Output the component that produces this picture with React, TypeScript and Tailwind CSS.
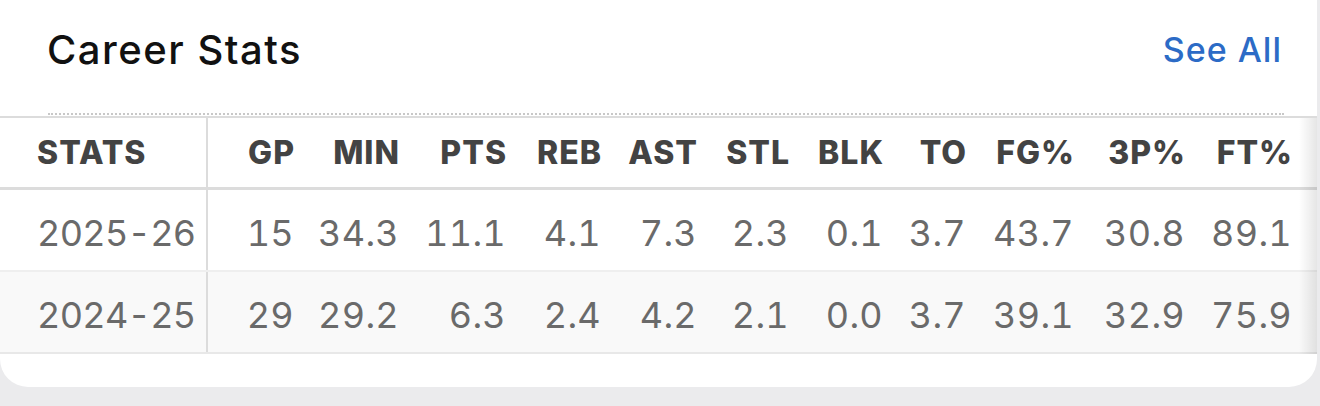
import React from "react";

const cols = [
  { k: "GP", w: "w-[86px]" },
  { k: "MIN", w: "w-[105px]" },
  { k: "PTS", w: "w-[107px]" },
  { k: "REB", w: "w-[95px]" },
  { k: "AST", w: "w-[96px]" },
  { k: "STL", w: "w-[92px]" },
  { k: "BLK", w: "w-[94px]" },
  { k: "TO", w: "w-[83px]" },
  { k: "FG%", w: "w-[108px]" },
  { k: "3P%", w: "w-[111px]" },
  { k: "FT%", w: "w-[107px]" },
];

const rows = [
  { season: "2025-26", vals: ["15", "34.3", "11.1", "4.1", "7.3", "2.3", "0.1", "3.7", "43.7", "30.8", "89.1"], bg: "bg-white", border: "border-[#efefef]" },
  { season: "2024-25", vals: ["29", "29.2", "6.3", "2.4", "4.2", "2.1", "0.0", "3.7", "39.1", "32.9", "75.9"], bg: "bg-[#f9f9f9]", border: "border-[#e8e8e8]" },
];

export default function App() {
  return (
    <div className="w-[1320px] h-[406px] bg-[#ebebed] overflow-hidden" style={{ fontFamily: "Inter, 'Liberation Sans', sans-serif" }}>
      <div className="w-[1317px] h-[387px] bg-white rounded-b-[28px] flex flex-col overflow-hidden">
        <div className="h-[100px] flex items-center justify-between pl-[47px] pr-[35px]">
          <div className="text-[40px] leading-none font-medium text-[#111111] tracking-[1.5px] whitespace-nowrap">Career Stats</div>
          <div className="text-[34px] leading-none font-medium text-[#2c6bc6] tracking-[1px] whitespace-nowrap">See All</div>
        </div>
        <div className="mt-[13px] ml-[48px] mr-[33px] h-0 border-t-2 border-dotted border-[#c8c8c8]" />
        <div className="relative mt-[1px] border-t-2 border-[#dcdcdc]">
          <div className="flex h-[72px] border-b-[3px] border-[#dcdcdc] text-[32px] font-extrabold text-[#434343] tracking-[1px] whitespace-nowrap">
            <div className="w-[208px] border-r-2 border-[#dcdcdc] pl-[37px] flex items-center">STATS</div>
            {cols.map((c) => (
              <div key={c.k} className={`${c.w} flex items-center justify-end`}>
                <span className="mr-[-1px]">{c.k}</span>
              </div>
            ))}
          </div>
          {rows.map((r) => (
            <div key={r.season} className={`flex h-[82px] border-b-2 ${r.border} ${r.bg} text-[36px] text-[#6a6a6a] tracking-[0.3px] tabular-nums whitespace-nowrap`}>
              <div className="w-[208px] border-r-2 border-[#dcdcdc] pl-[37px] pt-[5px] flex items-center tracking-[-0.7px]">{r.season}</div>
              {r.vals.map((v, i) => (
                <div key={i} className={`${cols[i].w} pt-[5px] flex items-center justify-end`}>{v}</div>
              ))}
            </div>
          ))}
          <div className="absolute right-0 top-0 bottom-0 w-[18px] bg-gradient-to-r from-transparent to-black/10" />
        </div>
      </div>
    </div>
  );
}
